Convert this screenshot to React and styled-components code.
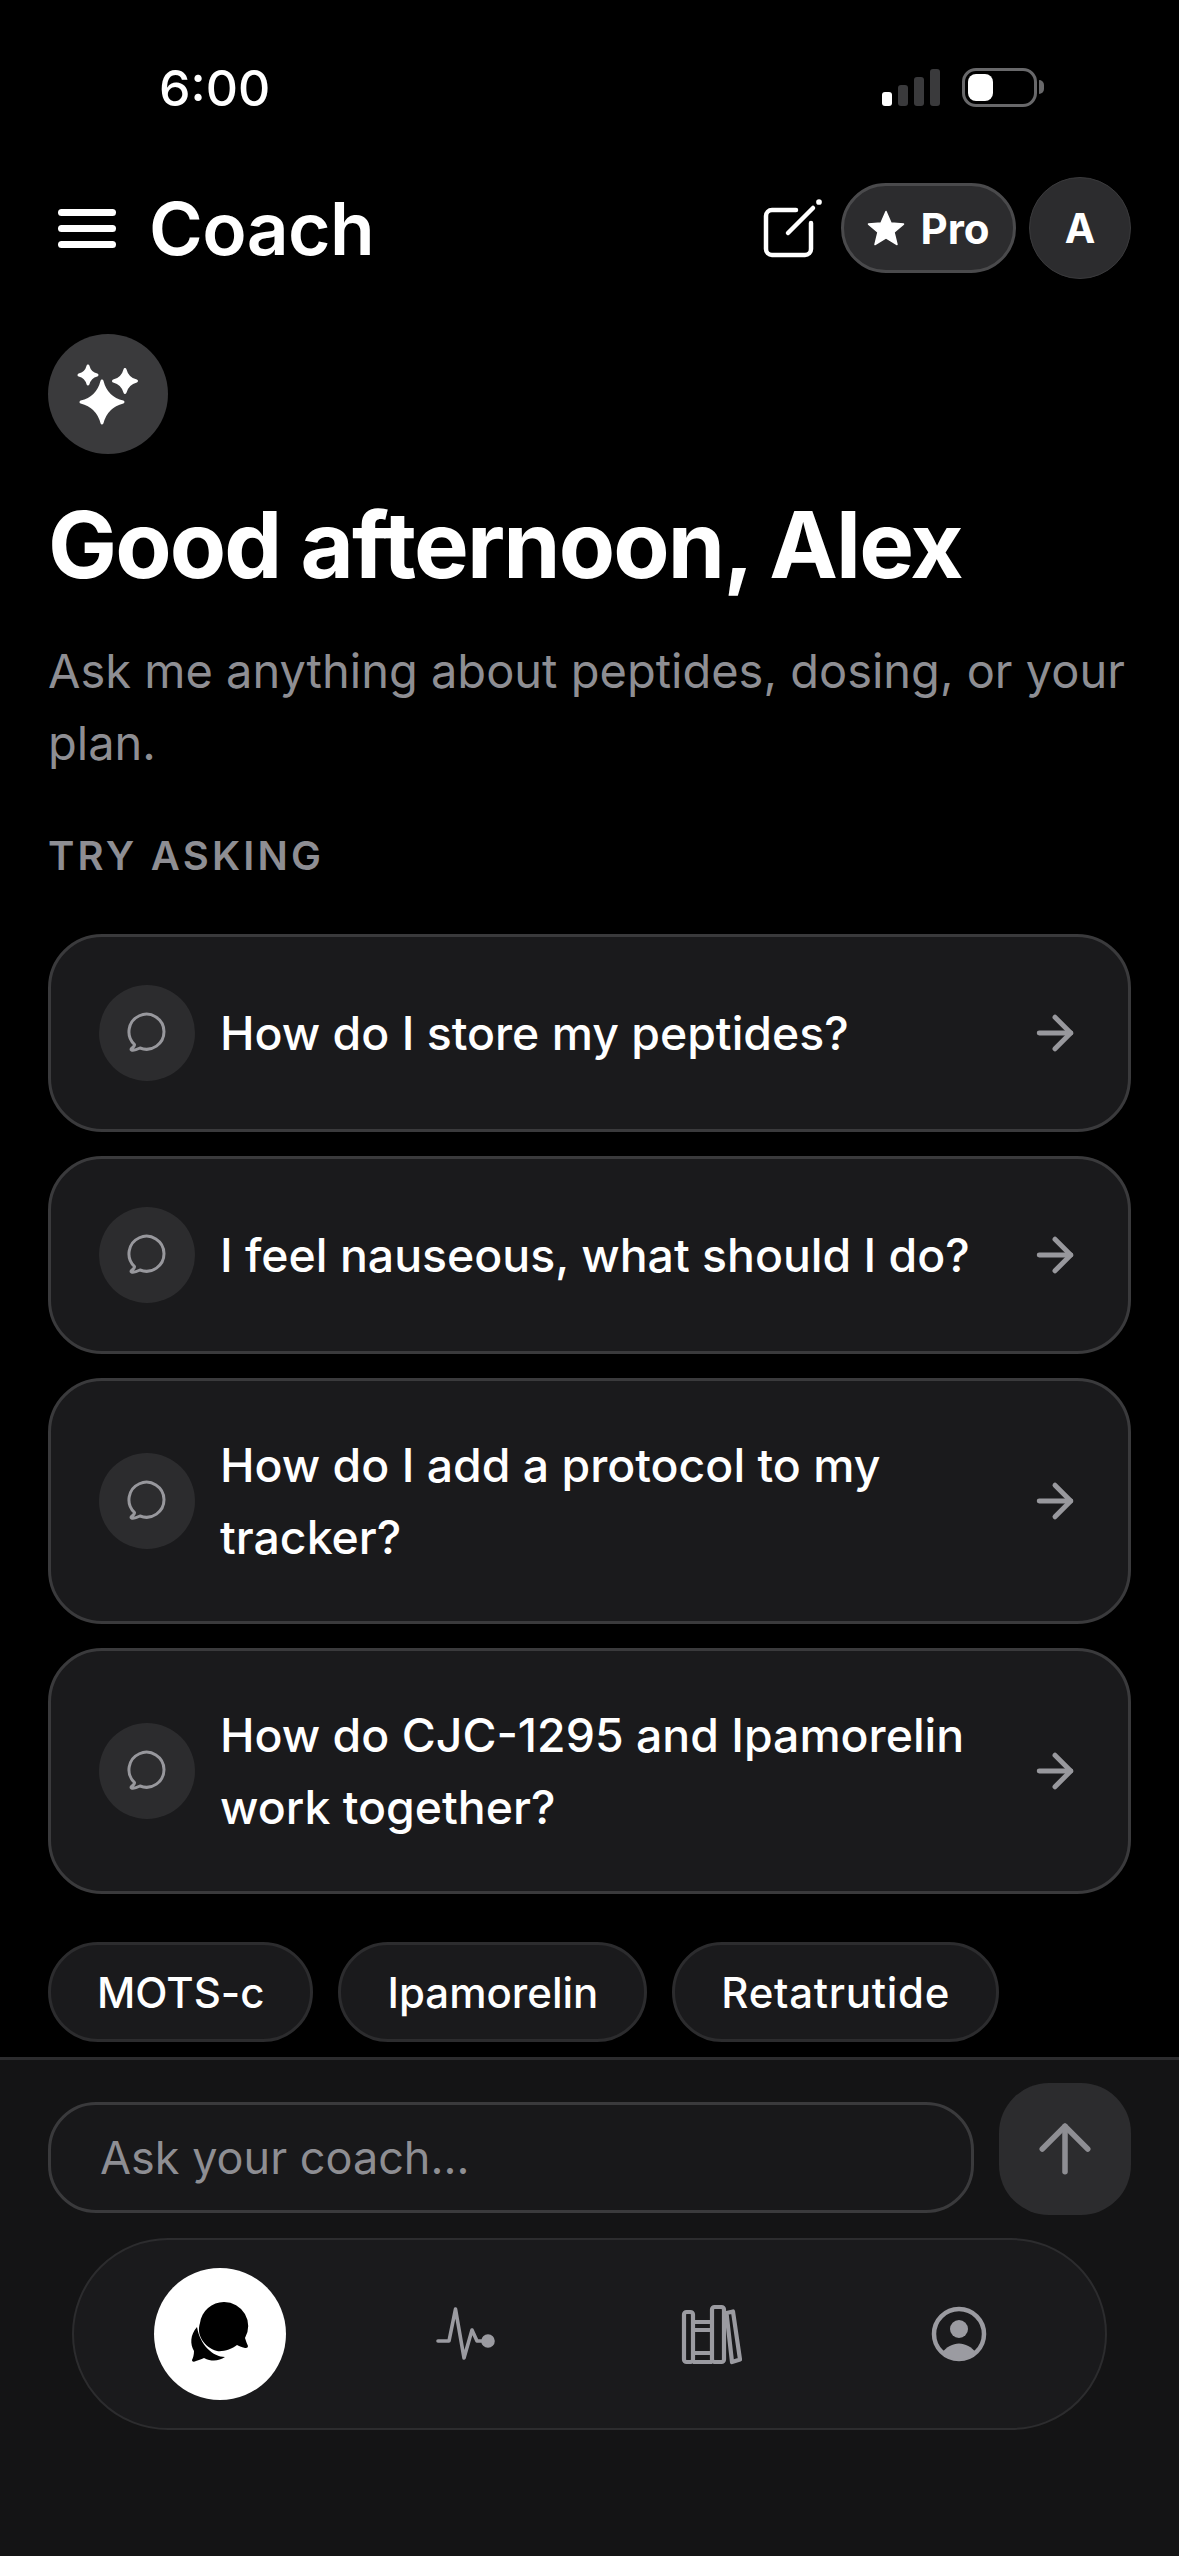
import React from "react"
import styled, { createGlobalStyle } from "styled-components"
import { ArrowRight, ArrowUp } from "lucide-react"

const GlobalStyle = createGlobalStyle`
  html, body {
    margin: 0;
    padding: 0;
    background: #000;
  }
  * {
    box-sizing: border-box;
  }
`

const Page = styled.div`
  width: 1179px;
  height: 2556px;
  display: flex;
  flex-direction: column;
  overflow: hidden;
  background: #000;
  color: #fff;
  font-family: Inter, "Liberation Sans", sans-serif;
`

const StatusBar = styled.div`
  height: 175px;
  display: flex;
  align-items: center;
  justify-content: space-between;
  padding: 0 142px 0 159px;
`

const Time = styled.span`
  font-size: 50px;
  font-weight: 500;
`

const StatusIcons = styled.div`
  display: flex;
  align-items: center;
  gap: 22px;
`

const Signal = styled.div`
  display: flex;
  align-items: flex-end;
  gap: 6px;
  height: 37px;
`

const SignalBar = styled.i`
  display: block;
  width: 10px;
  height: ${p => p.$h}px;
  border-radius: 3px;
  background: ${p => (p.$on ? "#fff" : "#3a3a3c")};
`

const Battery = styled.div`
  position: relative;
  width: 75px;
  height: 39px;
  padding: 3px;
  border: 3px solid #68686a;
  border-radius: 14px;
  &::after {
    content: "";
    position: absolute;
    right: -10px;
    top: 9px;
    width: 5px;
    height: 14px;
    border-radius: 0 6px 6px 0;
    background: #68686a;
  }
`

const BatteryFill = styled.div`
  width: 25px;
  height: 100%;
  border-radius: 8px;
  background: #fff;
`

const Header = styled.header`
  margin-top: 2px;
  height: 102px;
  display: flex;
  align-items: center;
  padding: 0 48px 0 58px;
`

const Burger = styled.div`
  width: 58px;
  display: flex;
  flex-direction: column;
  gap: 9px;
  margin-right: 33px;
  i {
    display: block;
    height: 7px;
    border-radius: 4px;
    background: #fff;
  }
`

const Title = styled.h2`
  flex: 1;
  margin: 0;
  font-size: 73px;
  font-weight: 600;
  letter-spacing: -0.6px;
`

const Compose = styled.svg`
  width: 64px;
  height: 64px;
  margin-right: 17px;
`

const ProPill = styled.div`
  width: 175px;
  height: 90px;
  display: flex;
  align-items: center;
  justify-content: center;
  gap: 15px;
  border: 3px solid #4a4a4c;
  border-radius: 45px;
  background: #2c2c2e;
  font-size: 42px;
  font-weight: 650;
`

const Avatar = styled.div`
  width: 102px;
  height: 102px;
  margin-left: 13px;
  display: flex;
  align-items: center;
  justify-content: center;
  border: 1px solid #3a3a3c;
  border-radius: 50%;
  background: #2c2c2e;
  font-size: 41px;
  font-weight: 700;
`

const Main = styled.main`
  padding: 55px 48px 0;
`

const SparkBadge = styled.div`
  width: 120px;
  height: 120px;
  border-radius: 50%;
  background: #3a3a3c;
  svg {
    display: block;
  }
`

const Greeting = styled.h1`
  margin: 36px 0 0;
  font-size: 92px;
  line-height: 110px;
  font-weight: 700;
  letter-spacing: -1.85px;
`

const Sub = styled.p`
  margin: 35px 0 0;
  font-size: 47px;
  line-height: 72px;
  color: #8e8e93;
`

const SectionLabel = styled.div`
  margin-top: 53px;
  font-size: 40px;
  line-height: 48px;
  font-weight: 600;
  letter-spacing: 3.2px;
  color: #8e8e93;
`

const Prompts = styled.div`
  margin-top: 54px;
  display: flex;
  flex-direction: column;
  gap: 24px;
`

const PromptCard = styled.div`
  min-height: 198px;
  display: flex;
  align-items: center;
  padding: 0 46px 0 48px;
  border: 3px solid #3a3a3c;
  border-radius: 54px;
  background: #1a1a1c;
  color: #98989d;
`

const PromptIcon = styled.div`
  flex: none;
  width: 96px;
  height: 96px;
  display: flex;
  align-items: center;
  justify-content: center;
  border-radius: 50%;
  background: #2c2c2e;
`

const PromptText = styled.div`
  flex: 1;
  margin: 0 16px 0 25px;
  padding: 48px 0;
  font-size: 46.4px;
  font-weight: 450;
  line-height: 72px;
  color: #fff;
`

const Chips = styled.div`
  margin-top: 48px;
  display: flex;
  gap: 25px;
`

const Chip = styled.div`
  height: 100px;
  display: flex;
  align-items: center;
  padding: 0 46px;
  border: 3px solid #2c2c2e;
  border-radius: 50px;
  background: #1a1a1c;
  font-size: 42px;
  font-weight: 500;
  letter-spacing: ${p => p.$track || 0}px;
`

const Footer = styled.footer`
  flex: 1;
  margin-top: 15px;
  padding-top: 23px;
  border-top: 3px solid #2c2c2e;
  background: #141415;
`

const InputRow = styled.div`
  display: flex;
  align-items: flex-end;
  gap: 25px;
  padding: 0 48px;
`

const AskInput = styled.input`
  flex: 1;
  min-width: 0;
  height: 111px;
  margin-bottom: 2px;
  padding: 0 49px;
  border: 3px solid #3a3a3c;
  border-radius: 48px;
  outline: none;
  background: #18181a;
  color: #fff;
  font-family: inherit;
  font-size: 45px;
  &::placeholder {
    color: #8e8e93;
    opacity: 1;
  }
`

const SendButton = styled.button`
  flex: none;
  width: 132px;
  height: 132px;
  padding: 0;
  display: flex;
  align-items: center;
  justify-content: center;
  border: 0;
  border-radius: 50px;
  background: #2c2c2e;
  color: #8e8e93;
`

const NavBar = styled.nav`
  height: 192px;
  margin: 23px 72px 0;
  display: flex;
  align-items: center;
  padding: 0 23px;
  border: 2px solid #2c2c2e;
  border-radius: 96px;
  background: #1a1a1c;
`

const NavItem = styled.div`
  flex: 1;
  display: flex;
  justify-content: center;
`

const ActiveNav = styled.div`
  width: 132px;
  height: 132px;
  display: flex;
  align-items: center;
  justify-content: center;
  border-radius: 50%;
  background: #fff;
`

// four pointed star with concave sides, centred on cx/cy
const star = (cx, cy, r) => {
  const k = r * 0.2
  return `M${cx} ${cy - r}Q${cx + k} ${cy - k} ${cx + r} ${cy}Q${cx + k} ${cy + k} ${cx} ${cy + r}Q${cx - k} ${cy + k} ${cx - r} ${cy}Q${cx - k} ${cy - k} ${cx} ${cy - r}Z`
}

const Sparkles = () => (
  <svg width="120" height="120" viewBox="0 0 120 120" fill="#fff" stroke="#fff" strokeWidth="3" strokeLinejoin="round">
    <path d={star(54, 68, 21)} />
    <path d={star(40, 41, 9)} />
    <path d={star(77, 47, 11.5)} />
  </svg>
)

const ProStar = () => (
  <svg width="38" height="36" viewBox="0 0 38 36" fill="#fff" stroke="#fff" strokeWidth="1.5" strokeLinejoin="round">
    <path d="M19 1.5l5 11.6 12.5 1-9.5 8.1 3 12.3L19 27.9 8 34.5l3-12.3-9.5-8.1 12.5-1z" />
  </svg>
)

const ChatBubble = () => (
  <svg width="44" height="44" viewBox="0 0 44 44" fill="none" stroke="#98989d" strokeWidth="3" strokeLinejoin="round">
    <path d="M9.5 33.5A17.5 17.5 0 1 1 15 37C12 38.5 8 39.5 6.5 39C5.8 38.6 6 38 6.5 37.5C8 36.5 9.5 35 9.5 33.5Z" />
  </svg>
)

const ChatsIcon = () => (
  <svg width="70" height="70" viewBox="0 0 70 70" fill="#000">
    <path d="M12 28C5 36 5 45 9 52C9 56 8 59 7 61C7 63 9 63 11 62C14 61 17 60 19 59C27 63 34 62 40 58C28 58 15 46 12 28Z" />
    <path d="M39 3A24 24 0 0 1 60 39C61 42 62 45 63 47C63 49 61 49 60 49C56 48 54 47 52 46C47 50 38 53 32 52C19 48 11 36 15 24A24 24 0 0 1 39 3Z" />
  </svg>
)

const PulseIcon = () => (
  <svg width="62" height="60" viewBox="0 0 62 60" fill="none" stroke="#9b9ba1" strokeWidth="3.6" strokeLinecap="round" strokeLinejoin="round">
    <path d="M3 37H14L20.5 5L29 54L37 26L42 37H50" />
    <circle cx="53" cy="37" r="5" fill="#9b9ba1" />
  </svg>
)

const BooksIcon = () => (
  <svg width="66" height="62" viewBox="0 0 66 62" fill="none" stroke="#9b9ba1" strokeWidth="4.2" strokeLinejoin="round">
    <rect x="4" y="9" width="9" height="50" rx="2.5" />
    <path d="M13 19H32M13 27H32M13 50H32M13 59H32" />
    <rect x="32" y="4" width="12" height="55" rx="2.5" />
    <path d="M46.5 10L53 8.5L60 56.5L52 59Z" />
  </svg>
)

const PersonIcon = () => (
  <svg width="60" height="60" viewBox="0 0 60 60" fill="#9b9ba1">
    <circle cx="30" cy="30" r="25" fill="none" stroke="#9b9ba1" strokeWidth="4.5" />
    <circle cx="30" cy="25" r="9" />
    <path d="M13 49C17 43 24 39.5 30 39.5C36 39.5 43 43 47 49C43 53 37 55 30 55C23 55 17 53 13 49Z" />
  </svg>
)

const prompts = [
  "How do I store my peptides?",
  "I feel nauseous, what should I do?",
  "How do I add a protocol to my tracker?",
  "How do CJC-1295 and Ipamorelin work together?",
]

const peptides = [
  { name: "MOTS-c" },
  { name: "Ipamorelin" },
  { name: "Retatrutide", track: 0.7 },
]

const App = () => (
  <Page>
    <GlobalStyle />
    <StatusBar>
      <Time>6:00</Time>
      <StatusIcons>
        <Signal>
          <SignalBar $h={14} $on />
          <SignalBar $h={21} />
          <SignalBar $h={29} />
          <SignalBar $h={37} />
        </Signal>
        <Battery>
          <BatteryFill />
        </Battery>
      </StatusIcons>
    </StatusBar>

    <Header>
      <Burger>
        <i />
        <i />
        <i />
      </Burger>
      <Title>Coach</Title>
      <Compose viewBox="0 0 64 64" fill="none" stroke="#fff" strokeWidth="4.5" strokeLinecap="round">
        <path d="M36 14H12a6 6 0 0 0-6 6V53a6 6 0 0 0 6 6H45a6 6 0 0 0 6-6V27" />
        <path d="M28 37L53 12" />
        <circle cx="59" cy="6" r="1.6" fill="#fff" strokeWidth="2.5" />
      </Compose>
      <ProPill>
        <ProStar />
        Pro
      </ProPill>
      <Avatar>A</Avatar>
    </Header>

    <Main>
      <SparkBadge>
        <Sparkles />
      </SparkBadge>
      <Greeting>Good afternoon, Alex</Greeting>
      <Sub>Ask me anything about peptides, dosing, or your plan.</Sub>
      <SectionLabel>TRY ASKING</SectionLabel>
      <Prompts>
        {prompts.map(text => (
          <PromptCard key={text}>
            <PromptIcon>
              <ChatBubble />
            </PromptIcon>
            <PromptText>{text}</PromptText>
            <ArrowRight size={54} strokeWidth={2.2} />
          </PromptCard>
        ))}
      </Prompts>
      <Chips>
        {peptides.map(({ name, track }) => (
          <Chip key={name} $track={track}>{name}</Chip>
        ))}
      </Chips>
    </Main>

    <Footer>
      <InputRow>
        <AskInput placeholder="Ask your coach..." />
        <SendButton>
          <ArrowUp size={78} strokeWidth={1.7} />
        </SendButton>
      </InputRow>
      <NavBar>
        <NavItem>
          <ActiveNav>
            <ChatsIcon />
          </ActiveNav>
        </NavItem>
        <NavItem>
          <PulseIcon />
        </NavItem>
        <NavItem>
          <BooksIcon />
        </NavItem>
        <NavItem>
          <PersonIcon />
        </NavItem>
      </NavBar>
    </Footer>
  </Page>
)

export default App
